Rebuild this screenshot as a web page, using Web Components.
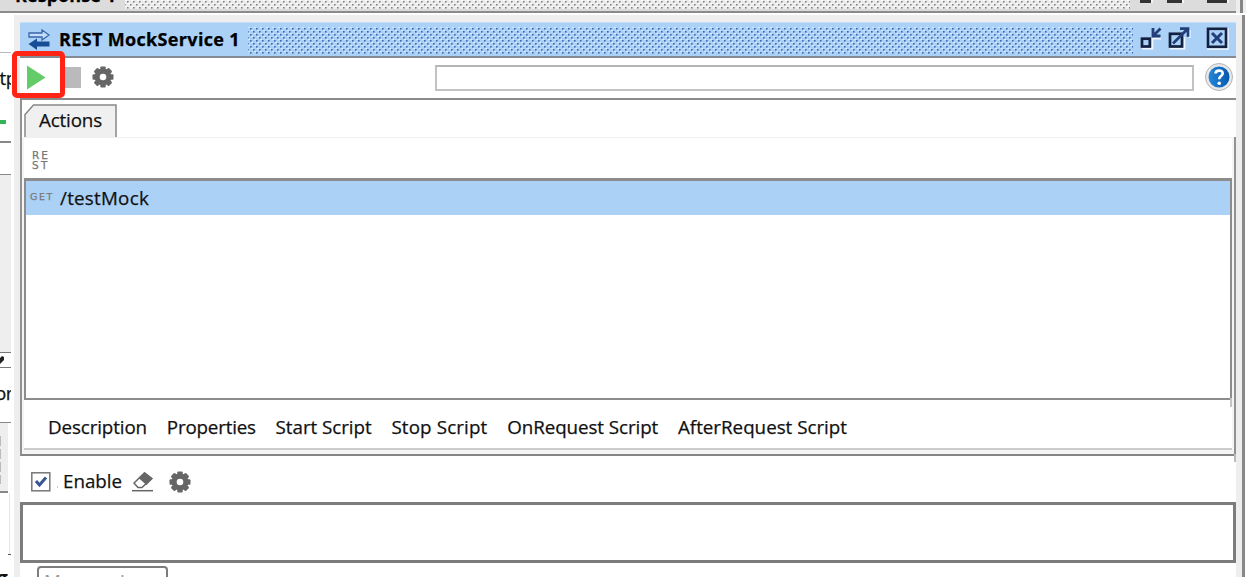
<!DOCTYPE html>
<html lang="en">
<head>
<meta charset="utf-8">
<title>REST MockService 1</title>
<style>
  html, body {
    margin: 0;
    height: 577px;
    overflow: hidden;
    background: #fff;
  }
  body {
    font: 18.8px/24px "Open Sans", "Noto Sans", sans-serif;
    color: #111;
    -webkit-text-stroke: 0.25px;
  }
</style>
</head>
<body>
<mock-desktop></mock-desktop>

<script>
"use strict";

// Text label, letter spacing is adjusted to fill the given width
class FitLabel extends HTMLElement {
  constructor() {
    super();
    this._root = this.attachShadow({ mode: "open" });
    this._root.innerHTML = /*html*/ `<style>
        :host { display: block; white-space: nowrap; flex: none; }
        span { display: inline-block; white-space: pre; vertical-align: top; }
      </style><span><slot></slot></span>`;
  }

  connectedCallback() {
    const width = parseFloat(this.getAttribute("width"));
    if (!width) {
      return;
    }
    const span = this._root.querySelector("span");
    const natural = span.getBoundingClientRect().width;
    const count = this.textContent.length;
    span.style.letterSpacing = (width - natural) / count + "px";
    this.style.width = width + "px";
  }
}

const ICONS = {
  swap: /*html*/ `<svg width="23" height="22" viewBox="0 0 23 22">
    <path d="M1 4h13V1l7 5-7 5V8H1z" fill="#c4defa" stroke="#3766aa" stroke-width="1.300"/>
    <path d="M21.500 12.500v5H9V21l-8.500-6 8.500-5.500v3z" fill="#174c96"/></svg>`,
  play: /*html*/ `<svg width="19" height="25" viewBox="0 0 19 25"><path d="M0 .5 18.500 12.500 0 24.500z" fill="#63cb68"/></svg>`,
  gear: /*html*/ `<svg width="22" height="22" viewBox="-11 -11 22 22">
    <g fill="#666"><circle r="8.400"/>
    <g><rect x="-2.700" y="-10.500" width="5.400" height="21" rx="1"/><rect x="-10.500" y="-2.700" width="21" height="5.400" rx="1"/></g>
    <g transform="rotate(45)"><rect x="-2.700" y="-10.500" width="5.400" height="21" rx="1"/><rect x="-10.500" y="-2.700" width="21" height="5.400" rx="1"/></g></g>
    <circle r="3.300" fill="#fff"/></svg>`,
  eraser: /*html*/ `<svg width="22" height="21" viewBox="0 0 22 21">
    <path d="M2 12 12.500 2l7 5.500-9.500 9H6z" fill="#fff" stroke="#666" stroke-width="1.500"/>
    <path d="M12.500 1 21 7.500l-6.500 6.500-8-7z" fill="#666"/>
    <path d="M0 19.700h21" stroke="#666" stroke-width="1.500"/></svg>`,
  help: /*html*/ `<svg width="30" height="30" viewBox="0 0 30 30">
    <defs><linearGradient id="b" x2="1"><stop stop-color="#2388dc"/><stop offset="1" stop-color="#0758ac"/></linearGradient></defs>
    <circle cx="15" cy="15" r="13.500" fill="#e8e8e8" stroke="#b5b5b5"/>
    <circle cx="15" cy="15" r="10.500" fill="url(#b)"/>
    <path d="M11.500 11.500C11.700 7.500 19 7.600 18.700 11.500 18.500 14.200 15.200 14 15.200 17.200" fill="none" stroke="#fff" stroke-width="2.700"/>
    <circle cx="15.200" cy="21.200" r="1.800" fill="#fff"/></svg>`,
  minimize: /*html*/ `<svg width="23" height="23" viewBox="0 0 23 23">
    <path d="M2 21.500h10.500V11M13 11.500h8" stroke="#eef6ff" stroke-width="1.800" fill="none"/>
    <rect x="2" y="11.700" width="7.800" height="7.800" fill="#abd1f6" stroke="#14203f" stroke-width="2.700"/>
    <path d="M13 1v8h7.500M13.500 8.500l7-7" stroke="#233f79" stroke-width="2.800" fill="none"/></svg>`,
  maximize: /*html*/ `<svg width="24" height="23" viewBox="0 0 24 23">
    <path d="M2 21.500h14.500V10M21.700 3v8" stroke="#eef6ff" stroke-width="1.800" fill="none"/>
    <rect x="2" y="6.800" width="12" height="12.700" fill="#abd1f6" stroke="#14203f" stroke-width="2.700"/>
    <path d="M5 16.500 18.500 3M12 1.700h8v8" stroke="#233f79" stroke-width="2.700" fill="none"/></svg>`,
  close: /*html*/ `<svg width="23" height="23" viewBox="0 0 23 23">
    <path d="M1 22h21V1" stroke="#eef6ff" stroke-width="1.500" fill="none"/>
    <rect x="2" y="1.800" width="18" height="18" fill="#abd1f6" stroke="#14203f" stroke-width="2.600"/>
    <path d="m6 6 10 10m0-10L6 16" stroke="#233f79" stroke-width="3"/></svg>`,
  check: /*html*/ `<svg width="20" height="20" viewBox="0 0 20 20">
    <rect x=".8" y=".8" width="18" height="18" fill="#fff" stroke="#777" stroke-width="1.500"/>
    <path d="m5 9 3.500 4L15 5.500" fill="none" stroke="#375493" stroke-width="3"/></svg>`,
};

class UiIcon extends HTMLElement {
  constructor() {
    super();
    this._root = this.attachShadow({ mode: "open" });
  }

  connectedCallback() {
    this._root.innerHTML = /*html*/ `
      <style>
        :host { display: block; flex: none; }
        svg { display: block; }
      </style>
      ${ICONS[this.getAttribute("name")]}
    `;
  }
}

// Repeating dotted handle of a title bar
class DragTexture extends HTMLElement {
  constructor() {
    super();
    this._root = this.attachShadow({ mode: "open" });
    this._root.innerHTML = /*html*/ `
      <style>
        :host { display: block; }
        svg { display: block; width: 100%; height: 100%; }
        .dark { fill: var(--dot-color, #3f68b0); }
        .light { fill: var(--dot-light, #d6e9ff); }
      </style>
      <svg>
        <defs>
          <pattern id="p" width="6" height="6" patternUnits="userSpaceOnUse">
            <rect class="light" width="2" height="1"/>
            <rect class="light" x="3" y="3" width="2" height="1"/>
            <rect class="dark" x="2" y="1" width="1.600" height="1.600"/>
            <rect class="dark" x="5" y="4" width="1" height="1.600"/>
            <rect class="dark" y="4" width=".6" height="1.600"/>
          </pattern>
        </defs>
        <rect width="100%" height="100%" fill="url(#p)"/>
      </svg>
    `;
  }
}

class TitleBar extends HTMLElement {
  constructor() {
    super();
    this._root = this.attachShadow({ mode: "open" });
    this._root.innerHTML = /*html*/ `
      <style>
        :host {
          box-sizing: border-box;
          display: flex;
          height: 36px;
          border-bottom: 2px solid #858b94;
          background: #abd1f6;
          padding: 0 7px 0 8px;
          font-size: 18px;
          font-weight: 700;
          color: #000;
        }
        .swap { margin-top: 6px; }
        .title { margin: 4px 0 0 8px; }
        drag-texture { flex: 1; height: 27px; margin: 4px 7px 0 8px; }
        .min { margin-top: 4px; }
        .max { margin: 4px 0 0 5px; }
        .close { margin: 4px 0 0 14px; }
      </style>
      <ui-icon class="swap" name="swap"></ui-icon>
      <fit-label class="title" width="181"></fit-label>
      <drag-texture></drag-texture>
      <ui-icon class="min" name="minimize"></ui-icon>
      <ui-icon class="max" name="maximize"></ui-icon>
      <ui-icon class="close" name="close"></ui-icon>
    `;
  }

  connectedCallback() {
    const label = this._root.querySelector("fit-label");
    label.textContent = this.getAttribute("caption");
    label.connectedCallback();
  }
}

class RunToolbar extends HTMLElement {
  constructor() {
    super();
    this._root = this.attachShadow({ mode: "open" });
    this._root.innerHTML = /*html*/ `
      <style>
        :host {
          box-sizing: border-box;
          display: flex;
          align-items: center;
          position: relative;
          height: 42px;
          padding: 0 2px 2px 7px;
          border-bottom: 2px solid #8b8b8b;
        }
        .stop { width: 21px; height: 21px; margin-left: 14px; background: #bababa; }
        .gear { margin-left: 11px; }
        .field {
          box-sizing: border-box;
          width: 759px;
          height: 26px;
          margin: 1px 10px 0 auto;
          border: 2px solid #c2c2c2;
          border-top-color: #b5b5b5;
        }
        .marker {
          position: absolute;
          box-sizing: border-box;
          left: -8px;
          top: -7px;
          width: 53px;
          height: 47px;
          border: 5px solid #ff2414;
          border-radius: 5px;
        }
      </style>
      <ui-icon name="play"></ui-icon>
      <div class="stop"></div>
      <ui-icon class="gear" name="gear"></ui-icon>
      <div class="field"></div>
      <ui-icon name="help"></ui-icon>
      <div class="marker"></div>
    `;
  }
}

class ActionsPanel extends HTMLElement {
  constructor() {
    super();
    this._root = this.attachShadow({ mode: "open" });
    this._root.innerHTML = /*html*/ `
      <style>
        * { box-sizing: border-box; }
        :host {
          box-sizing: border-box;
          display: flex;
          flex-direction: column;
          position: relative;
          height: 356px;
          border-left: 2px solid #929292;
          border-bottom: 2px solid #858585;
        }
        /* the right border runs on below the panel */
        :host::after {
          content: "";
          position: absolute;
          right: 0;
          top: 100%;
          width: 2px;
          height: 8px;
          background: #bbb;
        }
        .tabs { height: 37px; padding: 4px 0 0 2px; flex: none; }
        .tab { position: relative; width: 93px; height: 33px; padding: 4px 0 0 15px; }
        .tab svg { position: absolute; left: 0; top: 0; }
        .tab fit-label { position: relative; }
        .body {
          flex: 1;
          display: flex;
          flex-direction: column;
          padding-left: 2px;
          padding-right: 2px;
          border-right: 2px solid #929292;
          background: #f5f5f5;
        }
        .tools {
          height: 41px;
          padding: 12px 0 0 8px;
          border-top: 1px solid #f0f0f0;
          background: #fff;
          font: 10.500px/10px "DejaVu Sans", sans-serif;
          color: #777;
        }
        .list {
          position: relative;
          height: 222px;
          border: 2px solid #8c8c8c;
          border-top-width: 3px;
          background: #fff;
        }
        .list::after {
          content: "";
          position: absolute;
          right: -2px;
          top: 100%;
          width: 2px;
          height: 9px;
          background: #c4c4c4;
        }
        .row {
          display: flex;
          align-items: center;
          height: 34px;
          padding-left: 4px;
          background: #abd1f6;
        }
        .verb {
          font: 9.500px/10px "DejaVu Sans", sans-serif;
          color: #777;
          margin: 0 6px 2px 0;
        }
        .inspectors {
          display: flex;
          gap: 19.800px;
          height: 50px;
          padding: 15px 0 0 24px;
          border-bottom: 2px solid #ccc;
          background: #fff;
        }
      </style>
      <div class="tabs">
        <div class="tab">
          <svg width="93" height="33"><path d="M1 33V10.500L9.500 1H92v32" fill="#f0f0f0" stroke="#888" stroke-width="1.500"/></svg>
          <fit-label width="63">Actions</fit-label>
        </div>
      </div>
      <div class="body">
        <div class="tools"><fit-label width="18">RE</fit-label><fit-label width="18">ST</fit-label></div>
        <div class="list">
          <div class="row"><fit-label class="verb" width="24">GET</fit-label><fit-label width="89">/testMock</fit-label></div>
        </div>
        <div class="inspectors">
          <fit-label width="99">Description</fit-label>
          <fit-label width="89">Properties</fit-label>
          <fit-label width="96">Start Script</fit-label>
          <fit-label width="96">Stop Script</fit-label>
          <fit-label width="151">OnRequest Script</fit-label>
          <fit-label width="169">AfterRequest Script</fit-label>
        </div>
      </div>
    `;
  }
}

class LogPanel extends HTMLElement {
  constructor() {
    super();
    this._root = this.attachShadow({ mode: "open" });
    this._root.innerHTML = /*html*/ `
      <style>
        * { box-sizing: border-box; }
        :host { display: block; }
        .options { display: flex; align-items: center; height: 46px; padding: 5px 0 0 11px; }
        .dot { width: 1px; height: 2px; margin: 10px 5px 0 6px; background: #f4bd66; }
        .options fit-label { margin-top: -1px; }
        .eraser { margin-left: 10px; }
        .gear { margin-left: 15px; }
        .log { height: 61px; border: 3px solid #7c7c7c; }
        .button {
          width: 131px;
          height: 30px;
          margin: 3px 0 0 17px;
          padding: 1px 0 0 5px;
          border: 2px solid #7d7d7d;
          border-radius: 4px 4px 0 0;
          color: #999;
          -webkit-text-stroke: 0;
        }
      </style>
      <div class="options">
        <ui-icon name="check"></ui-icon>
        <div class="dot"></div>
        <fit-label width="59">Enable</fit-label>
        <ui-icon class="eraser" name="eraser"></ui-icon>
        <ui-icon class="gear" name="gear"></ui-icon>
      </div>
      <div class="log"></div>
      <div class="button"><fit-label width="105">Message Log</fit-label></div>
    `;
  }
}

// Visible edge of the window that lies behind, on the left
class BackEdge extends HTMLElement {
  constructor() {
    super();
    this._root = this.attachShadow({ mode: "open" });
    this._root.innerHTML = /*html*/ `
      <style>
        * { box-sizing: border-box; }
        :host { display: block; width: 11px; overflow: hidden; }
        div { width: 11px; overflow: hidden; flex: none; }
        .a { height: 40px; border-bottom: 1px solid #bbb; }
        .b { height: 90px; border-bottom: 2px solid #888; padding-top: 13px; }
        .b fit-label { margin-left: -7px; }
        .bar { width: 6px; height: 4px; margin-top: 30px; background: #35b455; }
        .c { height: 32px; border-bottom: 1px solid #888; }
        .d { height: 178px; background: #eee; border-bottom: 1px solid #777; }
        .e { height: 15px; border-bottom: 1px solid #777; }
        .e svg { display: block; }
        .f { height: 55px; border-bottom: 1px solid #888; padding-top: 13px; }
        .f fit-label { margin-left: -5px; }
        .g { width: 8px; height: 70px; padding-top: 13px; background: #eee; border-bottom: 2px solid #888; }
        .g i { display: block; width: 1px; height: 48px; background: repeating-linear-gradient(#bbb 0 10px, #eee 10px 13px); }
        .h { height: 62px; width: 10px; border-right: 1px solid #e5e5e5; }
        .i { width: 3px; height: 1px; margin: -1px 0 0 8px; background: #555; }
        .j { padding-top: 11px; font-weight: 700; color: #111; }
        .j fit-label { margin-left: -3px; }
      </style>
      <div class="a"></div>
      <div class="b"><fit-label width="24">ttp</fit-label><div class="bar"></div></div>
      <div class="c"></div>
      <div class="d"></div>
      <div class="e"><svg width="11" height="14"><path d="M0 5l2-2 2 1v3l-4 4z" fill="#222"/></svg></div>
      <div class="f"><fit-label width="18">or</fit-label></div>
      <div class="g"><i></i></div>
      <div class="h"></div>
      <div class="i"></div>
      <div class="j"><fit-label>g</fit-label></div>
    `;
  }
}

class BackTitle extends HTMLElement {
  constructor() {
    super();
    this._root = this.attachShadow({ mode: "open" });
    this._root.innerHTML = /*html*/ `
      <style>
        :host {
          box-sizing: border-box;
          display: flex;
          height: 13px;
          width: 1236px;
          overflow: hidden;
          border-bottom: 2px solid #8b8b8b;
          background: #dcdcdc;
          font-size: 18px;
          font-weight: 700;
          color: #000;
        }
        fit-label { margin: -17px 0 0 15px; }
        drag-texture {
          --dot-color: #858585;
          --dot-light: #fff;
          width: 1005px;
          height: 9px;
          margin-left: 9px;
          background: #ececec;
        }
        i { height: 3px; background: #333; border-right: 2px solid #f5f5f5; }
      </style>
      <fit-label width="101">Response 1</fit-label>
      <drag-texture></drag-texture>
      <i style="width: 11px; margin-left: 10px"></i>
      <i style="width: 15px; margin-left: 14px"></i>
      <i style="width: 20px; margin-left: 23px"></i>
    `;
  }
}

class MockDesktop extends HTMLElement {
  constructor() {
    super();
    this._root = this.attachShadow({ mode: "open" });
    this._root.innerHTML = /*html*/ `
      <style>
        :host {
          display: flex;
          flex-direction: column;
          width: 1246px;
          height: 577px;
          overflow: hidden;
          background: #fff;
        }
        .top { display: flex; height: 13px; flex: none; background: #eee; }
        .top::after { content: ""; width: 3px; margin-left: 4px; background: #858585; }
        .main { display: flex; flex: 1; min-height: 0; }
        .frame {
          box-sizing: border-box;
          width: 1231px;
          margin-left: 3px;
          margin-top: 2px;
          height: 600px;
          padding: 7px 6px 0 6px;
          border-right: 3px solid #888;
          background: #eee;
        }
        .inside { width: 1216px; background: #fff; }
        title-bar { border-top: 1px solid #c4dff8; }
      </style>
      <div class="top"><back-title></back-title></div>
      <div class="main">
        <back-edge></back-edge>
        <div class="frame">
          <div class="inside">
            <title-bar caption="REST MockService 1"></title-bar>
            <run-toolbar></run-toolbar>
            <actions-panel></actions-panel>
            <log-panel></log-panel>
          </div>
        </div>
      </div>
    `;
  }
}

customElements.define("fit-label", FitLabel);
customElements.define("ui-icon", UiIcon);
customElements.define("drag-texture", DragTexture);
customElements.define("title-bar", TitleBar);
customElements.define("run-toolbar", RunToolbar);
customElements.define("actions-panel", ActionsPanel);
customElements.define("log-panel", LogPanel);
customElements.define("back-edge", BackEdge);
customElements.define("back-title", BackTitle);
customElements.define("mock-desktop", MockDesktop);
</script>
</body>
</html>
